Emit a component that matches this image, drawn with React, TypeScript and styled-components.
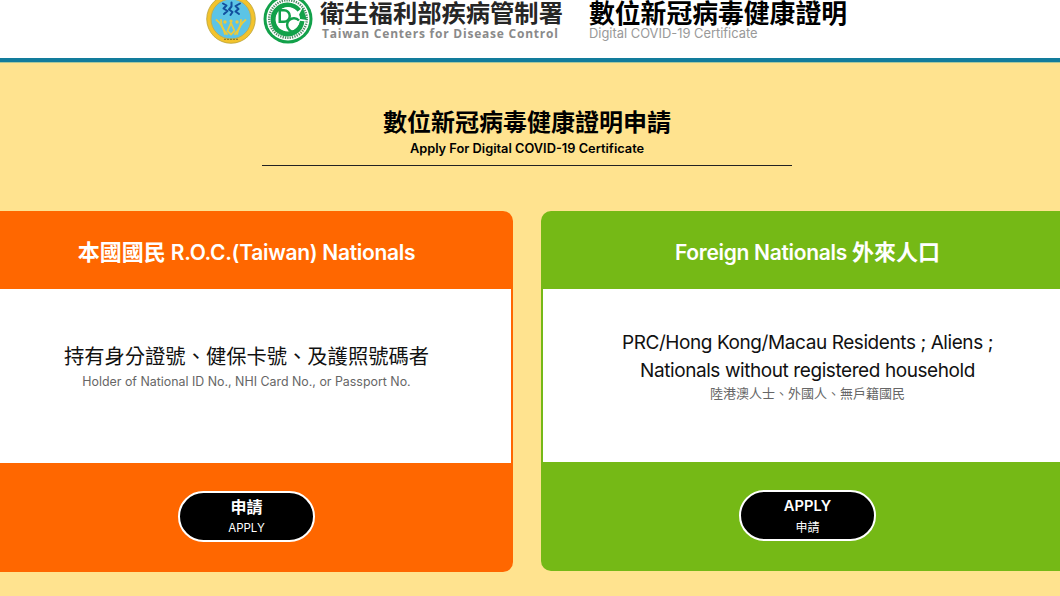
import React from "react";
import styled, { createGlobalStyle } from "styled-components";

const Global = createGlobalStyle`
  html, body { margin: 0; padding: 0; }
  body {
    width: 1060px; height: 596px; overflow: hidden;
    background: #ffe38f;
    font-family: Inter, "Noto Sans CJK TC", sans-serif;
  }
`;

const Header = styled.header`
  height: 58px;
  background: #fff;
  border-bottom: 4px solid #127c9c;
  box-shadow: 0 1px 0 #a9c69a;
  display: flex;
  align-items: flex-start;
  overflow: hidden;
  padding-left: 206px;
`;
const Logos = styled.div`
  display: flex;
  gap: 7px;
  margin-top: -6px;
`;
const OrgBlock = styled.div`
  margin-left: 7px;
  width: 270px;
  display: flex;
  flex-direction: column;
`;
const OrgName = styled.div`
  font-family: "Noto Sans CJK TC", sans-serif;
  font-size: 24.3px;
  line-height: 24px;
  font-weight: 700;
  color: #262626;
  white-space: nowrap;
`;
const OrgEnglish = styled.div`
  font-family: "Open Sans", sans-serif;
  font-size: 12px;
  line-height: 14px;
  font-weight: 700;
  letter-spacing: 0.78px;
  color: #8a8a8a;
  margin: 3px 0 0 2px;
  white-space: nowrap;
`;
const CertBlock = styled.div`
  margin-left: -1px;
  display: flex;
  flex-direction: column;
`;
const CertName = styled.div`
  font-family: "Noto Sans CJK TC", sans-serif;
  font-size: 25.8px;
  line-height: 24px;
  font-weight: 700;
  color: #000;
  white-space: nowrap;
`;
const CertEnglish = styled.div`
  font-size: 12.9px;
  line-height: 16px;
  color: #999;
  margin-top: 2px;
  white-space: nowrap;
`;

const Intro = styled.section`
  width: 530px;
  margin: 46px 0 0 262px;
  height: 57px;
  border-bottom: 1px solid #222;
  text-align: center;
`;
const Title = styled.h1`
  margin: 0;
  font-family: "Noto Sans CJK TC", sans-serif;
  font-size: 24px;
  line-height: 26px;
  font-weight: 700;
  color: #000;
`;
const Subtitle = styled.p`
  margin: 7px 0 0;
  font-size: 12.8px;
  line-height: 16px;
  font-weight: 600;
  color: #000;
`;

const Cards = styled.main`
  display: flex;
  gap: 28px;
  margin: 45px 0 0 -20px;
  width: 1094px;
`;
const Card = styled.article<{ $color: string; $tall?: boolean }>`
  width: 533px;
  height: ${(p) => (p.$tall ? 361 : 360)}px;
  flex: none;
  background: ${(p) => p.$color};
  border-radius: 10px;
  display: flex;
  flex-direction: column;
  color: #fff;
`;
const CardHead = styled.h2`
  margin: 0;
  height: 78px;
  flex: none;
  line-height: 82px;
  text-align: center;
  font-size: 21px;
  font-weight: 600;
  letter-spacing: -0.3px;
`;
const HeadCjk = styled.span`
  font-size: 22px;
  letter-spacing: 0;
`;
const CardBody = styled.div<{ $tall?: boolean }>`
  height: ${(p) => (p.$tall ? 174 : 173)}px;
  flex: none;
  box-sizing: border-box;
  padding-bottom: 18px;
  margin: 0 2px;
  background: #fff;
  display: flex;
  flex-direction: column;
  align-items: center;
  justify-content: center;
  text-align: center;
`;
const MainText = styled.div<{ $cjk?: boolean }>`
  font-size: ${(p) => (p.$cjk ? 20.3 : 19)}px;
  letter-spacing: ${(p) => (p.$cjk ? 0 : -0.42)}px;
  line-height: 27.5px;
  color: #111;
`;
const SubText = styled.div<{ $cjk?: boolean }>`
  font-size: ${(p) => (p.$cjk ? 13 : 12.4)}px;
  line-height: 18px;
  color: #666;
  margin: ${(p) => (p.$cjk ? "0 0 2px" : "2px 0 0")};
`;
const CardFoot = styled.div`
  flex: 1;
  box-sizing: border-box;
  padding-bottom: 3px;
  display: flex;
  align-items: center;
  justify-content: center;
`;
const ApplyButton = styled.button<{ $low?: boolean }>`
  width: 137px;
  height: 51px;
  box-sizing: border-box;
  border: 2px solid #fff;
  border-radius: 26px;
  background: #000;
  color: #fff;
  font-family: inherit;
  display: flex;
  flex-direction: column;
  align-items: center;
  justify-content: center;
  padding: ${(p) => (p.$low ? "2px 0 0" : "1px 0 0")};
`;
const ButtonMain = styled.span<{ $cjk?: boolean }>`
  font-size: ${(p) => (p.$cjk ? 16 : 14.7)}px;
  line-height: 20px;
  font-weight: 600;
`;
const ButtonSub = styled.span<{ $cjk?: boolean }>`
  font-size: ${(p) => (p.$cjk ? 12 : 11.5)}px;
  line-height: 17px;
  margin-top: 3px;
`;

const HealthLogo = () => (
  <svg width="50" height="50" viewBox="0 0 50 50">
    <circle cx="25" cy="25" r="24.3" fill="#f3c32c" stroke="#b9a23a" strokeWidth="0.8" />
    <circle cx="25" cy="25" r="20" fill="#5cc4e6" stroke="#bcae52" strokeWidth="1" />
    <g fill="none" stroke="#124f9e" strokeWidth="2" strokeLinecap="round" strokeLinejoin="round">
      <path d="M17 9.5l3.5 2-3 3 4 2.5-3.5 3" />
      <path d="M25.5 8.5v4l-2.5 3 3.5 2.5-2 3" />
      <path d="M34 9.5l-4.5 2.5 3 3-3 2.5 3.5 2.5" />
    </g>
    <g fill="none" stroke="#e9cb3e" strokeWidth="1.8" strokeLinecap="round">
      <path d="M10.5 26c4 3 7 8 8.5 14" />
      <path d="M15 26c0 5 2 10 6 14" />
      <path d="M39.5 26c-4 3-7 8-8.5 14" />
      <path d="M35 26c0 5-2 10-6 14" />
      <path d="M25 29l-3.5 8 3.5 3.5 3.5-3.5z" />
    </g>
    <circle cx="19" cy="28" r="1.7" fill="#e9cb3e" />
    <circle cx="31" cy="28" r="1.7" fill="#e9cb3e" />
    <circle cx="25" cy="27" r="1.6" fill="#e9cb3e" />
    <path d="M18 45.4h14" stroke="#8d7f2c" strokeWidth="1.4" strokeDasharray="2 1" />
  </svg>
);

const CdcLogo = () => (
  <svg width="50" height="50" viewBox="0 0 50 50">
    <circle cx="25" cy="25" r="24.5" fill="#12a14a" />
    <circle cx="25" cy="25" r="21.5" fill="#fff" />
    <circle
      cx="25"
      cy="25"
      r="18.8"
      fill="none"
      stroke="#4f8a66"
      strokeWidth="2.4"
      strokeDasharray="1.3 1.1"
    />
    <path d="M36 16.5A14.5 14.5 0 1 0 39 27" fill="none" stroke="#12a14a" strokeWidth="5" />
    <path d="M34 24.5L39.8 13.5L44 26z" fill="#12a14a" />
    <circle cx="25" cy="25" r="12" fill="#fff" />
    <path
      d="M15.5 15h5.5a7 7 0 0 1 0 14h-5.5zM18 17.5v9h3a4.5 4.5 0 0 0 0-9z"
      fill="#12a14a"
      fillRule="evenodd"
    />
    <path d="M36 26.5a6.8 6.8 0 1 0 0 9" fill="none" stroke="#12a14a" strokeWidth="2.4" />
  </svg>
);

export default function App() {
  return (
    <>
      <Global />
      <Header>
        <Logos>
          <HealthLogo />
          <CdcLogo />
        </Logos>
        <OrgBlock>
          <OrgName>衛生福利部疾病管制署</OrgName>
          <OrgEnglish>Taiwan Centers for Disease Control</OrgEnglish>
        </OrgBlock>
        <CertBlock>
          <CertName>數位新冠病毒健康證明</CertName>
          <CertEnglish>Digital COVID-19 Certificate</CertEnglish>
        </CertBlock>
      </Header>
      <Intro>
        <Title>數位新冠病毒健康證明申請</Title>
        <Subtitle>Apply For Digital COVID-19 Certificate</Subtitle>
      </Intro>
      <Cards>
        <Card $color="#ff6700" $tall>
          <CardHead>
            <HeadCjk>本國國民</HeadCjk> R.O.C.(Taiwan) Nationals
          </CardHead>
          <CardBody $tall>
            <MainText $cjk>持有身分證號、健保卡號、及護照號碼者</MainText>
            <SubText>Holder of National ID No., NHI Card No., or Passport No.</SubText>
          </CardBody>
          <CardFoot>
            <ApplyButton>
              <ButtonMain $cjk>申請</ButtonMain>
              <ButtonSub>APPLY</ButtonSub>
            </ApplyButton>
          </CardFoot>
        </Card>
        <Card $color="#75b916">
          <CardHead>
            Foreign Nationals <HeadCjk>外來人口</HeadCjk>
          </CardHead>
          <CardBody>
            <MainText>
              PRC/Hong Kong/Macau Residents ; Aliens ;
              <br />
              Nationals without registered household
            </MainText>
            <SubText $cjk>陸港澳人士、外國人、無戶籍國民</SubText>
          </CardBody>
          <CardFoot>
            <ApplyButton $low>
              <ButtonMain>APPLY</ButtonMain>
              <ButtonSub $cjk>申請</ButtonSub>
            </ApplyButton>
          </CardFoot>
        </Card>
      </Cards>
    </>
  );
}
